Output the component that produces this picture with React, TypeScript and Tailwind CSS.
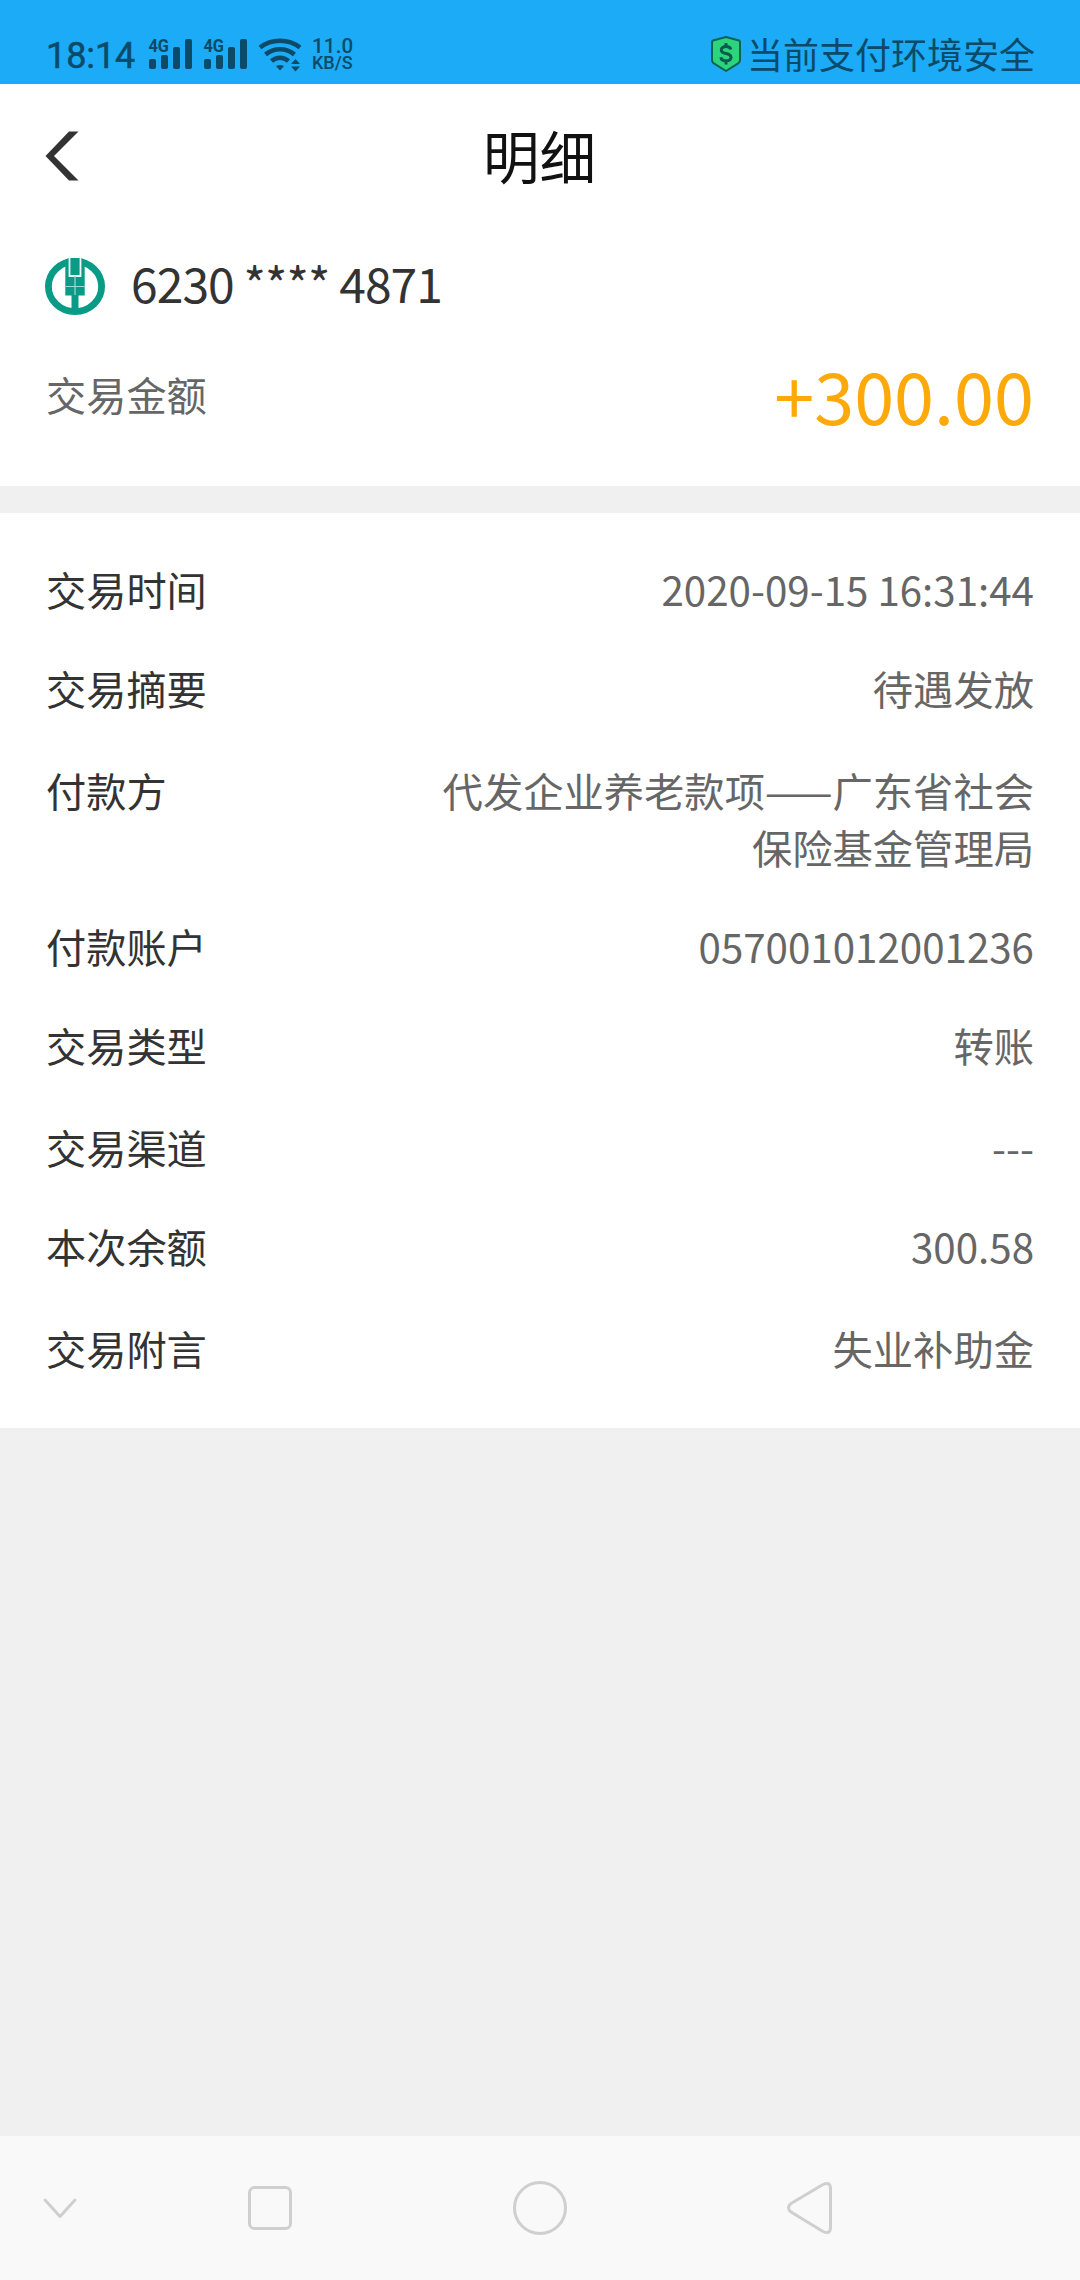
const details = [
  { label: "交易时间", lines: ["2020-09-15 16:31:44"] },
  { label: "交易摘要", lines: ["待遇发放"] },
  { label: "付款方", lines: ["代发企业养老款项——广东省社会", "保险基金管理局"], spaced: true },
  { label: "付款账户", lines: ["057001012001236"] },
  { label: "交易类型", lines: ["转账"] },
  { label: "交易渠道", lines: ["---"], spaced: true },
  { label: "本次余额", lines: ["300.58"] },
  { label: "交易附言", lines: ["失业补助金"], spaced: true },
]

function Signal() {
  return (
    <svg className="overflow-visible" width="44" height="32" viewBox="0 0 44 32" fill="currentColor">
      <text x="-0.5" y="13.5" fontSize="17.5" fontWeight="700" fontFamily="Roboto, sans-serif" textLength="20.5" lengthAdjust="spacingAndGlyphs">4G</text>
      <rect x="0" y="21" width="7" height="10" rx="2" />
      <rect x="12" y="17" width="7" height="14" rx="2" />
      <rect x="24" y="9" width="7" height="22" rx="2" />
      <rect x="36" y="1" width="7" height="30" rx="2" />
    </svg>
  )
}

function Wifi() {
  return (
    <svg width="44" height="34" viewBox="0 0 44 34" fill="none" stroke="currentColor" strokeWidth="4.6">
      <path d="M2 9.5C13.5 0.5 30.5 0.5 42 9.5" />
      <path d="M7.5 16.5C16 9.5 28 9.5 36.5 16.5" />
      <path d="M13.5 23C18.5 18.6 25.5 18.6 30.5 23" />
      <path d="M18 28C20.5 26.6 23.5 26.6 26 28L22 32.5Z" fill="currentColor" stroke="none" />
      <path d="M33 26L37.5 21L42 26ZM33 28.5H42L37.5 33.5Z" fill="currentColor" stroke="none" />
    </svg>
  )
}

function Shield() {
  return (
    <svg width="32" height="38" viewBox="0 0 32 38">
      <path d="M16 2L29 5.5Q30 6 30 7V25Q30 27 28.5 28.2L16 36L3.5 28.2Q2 27 2 25V7Q2 6 3 5.5Z" fill="#2bd47d" stroke="#0c6350" strokeWidth="2" strokeLinejoin="round" />
      <path d="M20.8 14.5C20.3 12.3 18.5 11.5 16 11.5C13.2 11.5 11.3 12.8 11.3 14.9C11.3 20 21 17 21 22.3C21 24.7 18.8 25.8 16 25.8C13.2 25.8 11.2 24.6 10.9 22.2M16 8V11.5M16 25.8V29.5" fill="none" stroke="#0b5a4c" strokeWidth="3" />
    </svg>
  )
}

function BankLogo() {
  return (
    <svg width="60" height="57" viewBox="0 0 60 57">
      <ellipse cx="30" cy="28.5" rx="26.6" ry="25.1" fill="#fff" stroke="#0a9b86" strokeWidth="6.8" />
      <path d="M20.3 1.5L24 0H36L39.7 1.5V37.5H33.5V52H26.5V37.5H20.3Z" fill="#0a9b86" />
      <path d="M24.5 0V18H35.5V0" fill="none" stroke="#eefaf7" strokeWidth="1.8" />
      <path d="M30 18V37M20.3 28.5H39.7" stroke="#9adcd1" strokeWidth="1.2" />
    </svg>
  )
}

function StatusBar() {
  return (
    <header className="flex h-[84px] items-start justify-between bg-[#1cabf7] pl-[46px] pr-[45px] text-[#0b4a69]">
      <div className="flex pt-[38px] font-[Roboto,sans-serif]">
        <span className="w-[103px] text-[36px] leading-[36px] tracking-[-0.1px] [-webkit-text-stroke:0.5px_#0b4a69]">18:14</span>
        <div className="flex gap-[11px]">
          <Signal />
          <Signal />
        </div>
        <div className="ml-[10px]">
          <Wifi />
        </div>
        <div className="ml-[10px] font-medium">
          <p className="text-[20.5px] leading-4 tracking-[0.2px]">11.0</p>
          <p className="pt-px text-[18px] leading-4">KB/S</p>
        </div>
      </div>
      <div className="flex items-start gap-[5px] pt-[35px]">
        <Shield />
        <span className="mt-[-1px] text-[36px] leading-[38px]">当前支付环境安全</span>
      </div>
    </header>
  )
}

function NavBar() {
  return (
    <footer className="h-[144px] bg-[#f9f9f9]">
      <svg width="1080" height="144" viewBox="0 0 1080 144" fill="none" stroke="#cfcfcf" strokeWidth="3" strokeLinecap="round" strokeLinejoin="round">
        <path d="M45 64L60 80.5L75 64" />
        <rect x="249.5" y="51.5" width="41" height="41" rx="5" />
        <circle cx="540" cy="72" r="25.5" />
        <path d="M823 48.5Q830.5 45 830.5 53V91Q830.5 99 823 95.5L791 76Q786 71.5 791 67.5Z" />
      </svg>
    </footer>
  )
}

export default function App() {
  return (
    <div className="flex h-[2280px] w-[1080px] flex-col overflow-hidden bg-[#f0f0f0] font-['Noto_Sans_CJK_SC',sans-serif] text-[#333]">
      <StatusBar />

      <section className="h-[402px] bg-white pl-[45px] pr-[46px]">
        <div className="grid h-[144px] grid-cols-[1fr_auto_1fr] items-center">
          <svg width="34" height="50" viewBox="0 0 34 50" fill="#333">
            <path d="M0.5 25L24 0.5H33.5L9 25L33.5 49.5H24Z" />
          </svg>
          <h1 className="pb-[5px] text-[56.5px] leading-[80px] text-[#111]">明细</h1>
        </div>

        <div className="flex h-[116px] items-center">
          <BankLogo />
          <span className="ml-[26px] pb-[8px] text-[48px] leading-[60px] tracking-[-0.95px]">6230 **** 4871</span>
        </div>

        <div className="flex h-[101px] items-center justify-between">
          <span className="ml-px text-[40.2px] text-[#666]">交易金额</span>
          <span className="pb-[2px] text-[72px] leading-[80px] text-[#fea90a]">+300.00</span>
        </div>
      </section>

      <section className="mt-[27px] flex h-[915px] flex-col gap-[42px] bg-white px-[46px] pt-[47px] text-[40.2px] leading-[57px]">
        {details.map(({ label, lines, spaced }) => (
          <div key={label} className={spaced ? "mt-[3px] flex justify-between" : "flex justify-between"}>
            <span>{label}</span>
            <div className="text-right text-[40.3px] text-[#666]">
              {lines.map((line) => (
                <p key={line}>{line}</p>
              ))}
            </div>
          </div>
        ))}
      </section>

      <div className="flex-1" />
      <NavBar />
    </div>
  )
}
